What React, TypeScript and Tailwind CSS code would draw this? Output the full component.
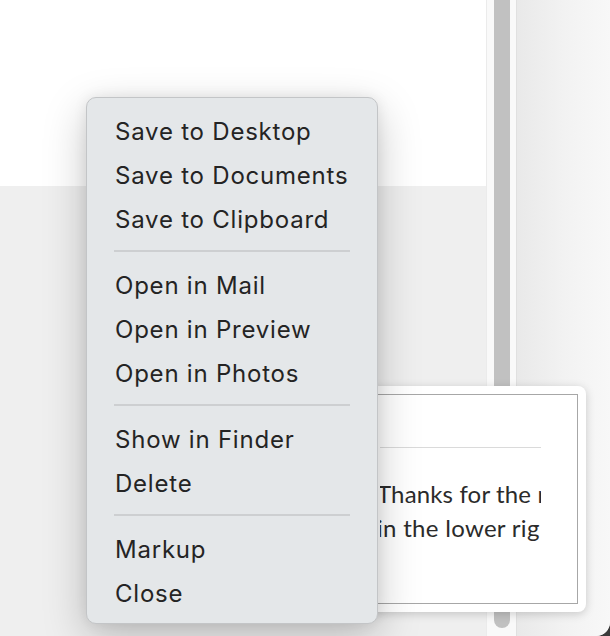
import React from 'react';

const groups: string[][] = [
  ['Save to Desktop', 'Save to Documents', 'Save to Clipboard'],
  ['Open in Mail', 'Open in Preview', 'Open in Photos'],
  ['Show in Finder', 'Delete'],
  ['Markup', 'Close'],
];

function ContextMenu() {
  return (
    <div className="absolute left-[86px] top-[97px] w-[292px] rounded-[10px] border border-[#c3c5c7] bg-[#e4e7e9] pt-[11px] pb-[8px] shadow-[0_14px_44px_rgba(0,0,0,0.22),0_0_14px_rgba(0,0,0,0.08)]">
      {groups.map((group, gi) => (
        <div key={gi}>
          {gi > 0 && (
            <div className="h-[22px] pt-[9px]">
              <div className="mx-[27px] h-[2px] bg-[#cdcfd1]" />
            </div>
          )}
          {group.map((label) => (
            <div
              key={label}
              className="flex h-[44px] items-center pl-[28px] pt-[1px] text-[24px] tracking-[0.78px] text-[#242424]"
            >
              {label}
            </div>
          ))}
        </div>
      ))}
    </div>
  );
}

function NoteCard() {
  return (
    <div
      className="absolute left-[330px] top-[386px] h-[226px] w-[256px] rounded-[8px] bg-white p-[8px] shadow-[0_2px_10px_rgba(0,0,0,0.18)]"
      style={{ fontFamily: 'Lato, "Open Sans", sans-serif' }}
    >
      <div className="h-full border border-[#a7a7a7] pl-[41px] pr-[36px] pt-[52px]">
        <div className="overflow-hidden">
          <div className="h-px bg-[#dadada]" />
          <div className="mt-[29px] whitespace-nowrap text-[24px] leading-[34px] tracking-[0.3px] text-[#2b2b2b]">
            <div className="-ml-[3px] tracking-[0.15px]">Thanks for the r</div>
            <div className="-ml-[3px]">in the lower rig</div>
          </div>
        </div>
      </div>
    </div>
  );
}

export default function App() {
  return (
    <div
      className="relative h-[636px] w-[610px] overflow-hidden bg-[#3a3a3a]"
      style={{ fontFamily: 'Inter, "Liberation Sans", sans-serif' }}
    >
      <div className="flex h-full w-full overflow-hidden rounded-br-[14px] bg-[#efefef]">
        <div className="flex w-[486px] flex-col">
          <div className="h-[186px] bg-white" />
          <div className="flex-1 bg-[#efefef]" />
        </div>
        <div className="flex w-[31px] border-x border-l-[#ebebeb] border-r-[#e0e0e0] bg-[#f9f9f9] pl-[7px] pr-[6px]">
          <div className="h-[628px] w-[16px] rounded-b-full bg-[#c1c1c1]" />
        </div>
        <div className="flex-1 bg-gradient-to-r from-[#e9e9e9] via-[#f2f2f2] to-[#f8f8f8]" />
      </div>
      <NoteCard />
      <ContextMenu />
    </div>
  );
}
